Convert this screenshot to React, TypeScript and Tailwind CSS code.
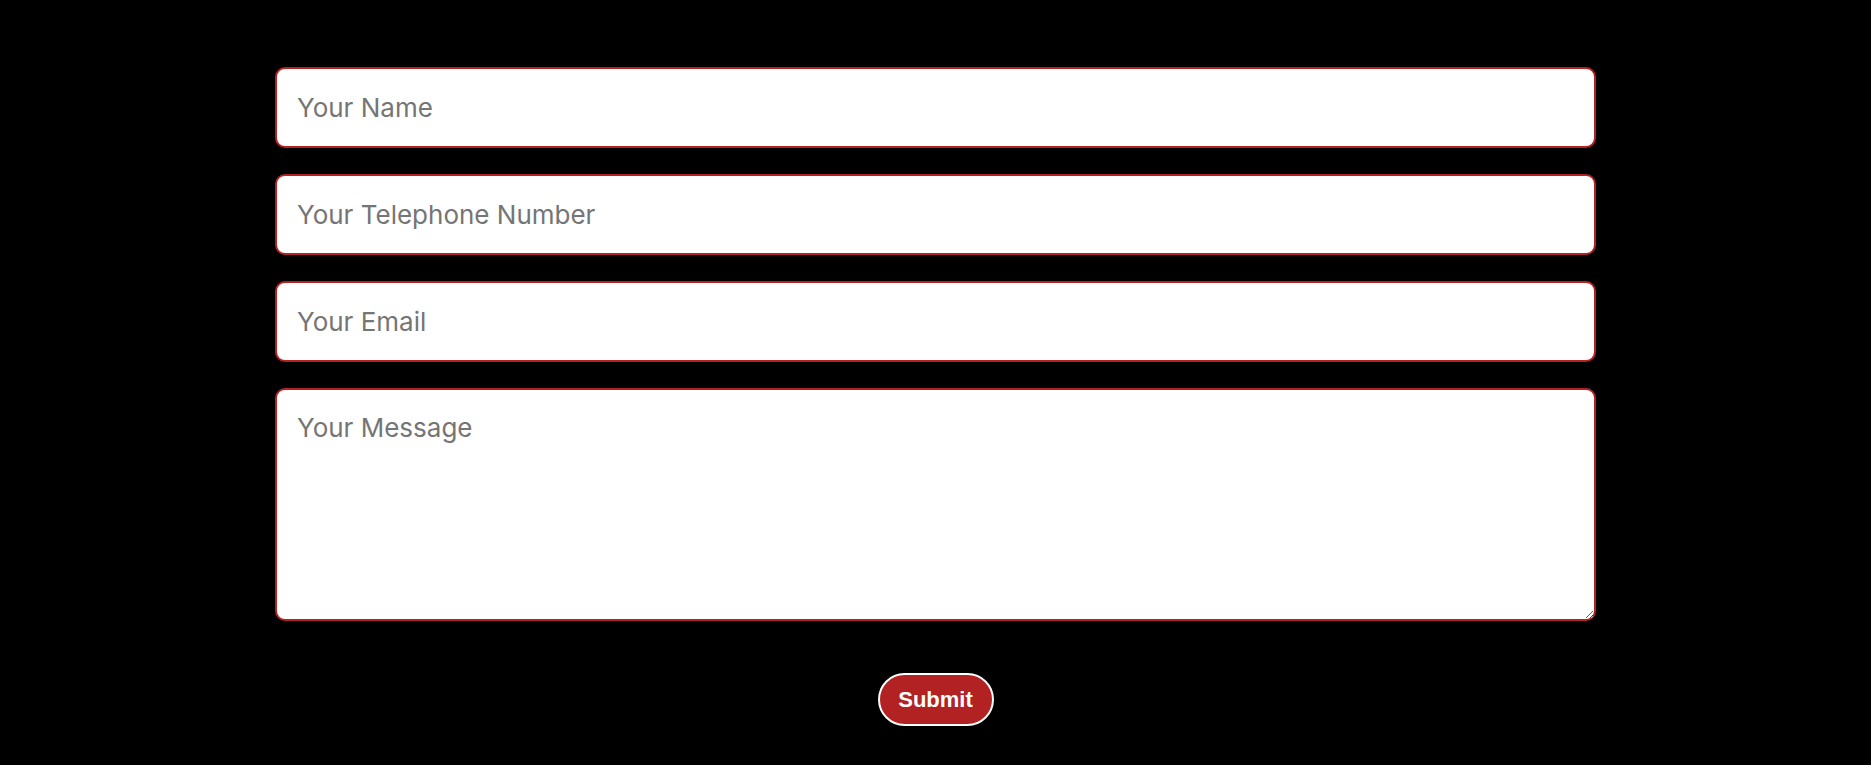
import { useState } from 'react'

const fieldClass =
  'w-full h-[81px] rounded-[10px] border-2 border-[#b22222] bg-white px-5 text-[26px] text-[#333] outline-none placeholder:text-[#757575] font-["Inter",sans-serif]'

export default function App() {
  const [form, setForm] = useState({ name: '', phone: '', email: '', message: '' })

  const update = (key: keyof typeof form) => (e: React.ChangeEvent<HTMLInputElement | HTMLTextAreaElement>) =>
    setForm({ ...form, [key]: e.target.value })

  return (
    <div className="min-h-screen bg-black pt-[67px] pb-[39px]">
      <form
        className="mx-auto flex w-[1321px] flex-col gap-[26px]"
        onSubmit={(e) => e.preventDefault()}
      >
        <input className={fieldClass} placeholder="Your Name" value={form.name} onChange={update('name')} />
        <input className={fieldClass} placeholder="Your Telephone Number" value={form.phone} onChange={update('phone')} />
        <input className={fieldClass} placeholder="Your Email" value={form.email} onChange={update('email')} />
        <textarea
          className='block h-[233px] w-full rounded-[10px] border-2 border-[#b22222] bg-white px-5 pt-[22px] text-[26px] leading-[normal] text-[#333] outline-none placeholder:text-[#757575] font-["Inter",sans-serif]'
          placeholder="Your Message"
          value={form.message}
          onChange={update('message')}
        />

        {/* submit */}
        <div className="mt-[26px] flex justify-center">
          <button
            type="submit"
            className='h-[53px] w-[116px] rounded-full border-2 border-white bg-[#b22222] text-[22px] font-bold text-white font-["Liberation_Sans",Arial,sans-serif]'
          >
            Submit
          </button>
        </div>
      </form>
    </div>
  )
}
